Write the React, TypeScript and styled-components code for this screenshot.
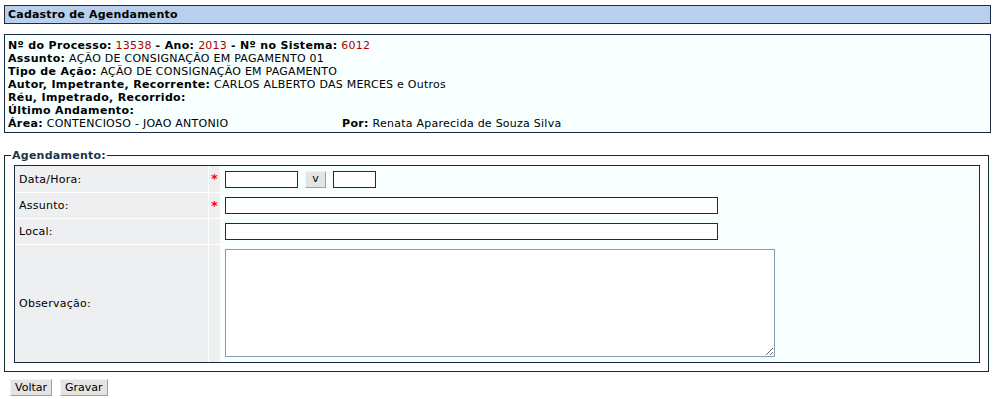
import styled, { createGlobalStyle } from 'styled-components'
import { ReactNode } from 'react'

const GlobalStyle = createGlobalStyle`
  body {
    margin: 0;
    background: #ffffff;
    font-family: 'DejaVu Sans', Verdana, sans-serif;
    font-size: 11px;
    letter-spacing: 0.25px;
    color: #000000;
  }
`

const Page = styled.div`
  padding: 5px 4px 0 4px;
  display: flex;
  flex-direction: column;
`

const TitleBar = styled.div`
  height: 17px;
  line-height: 17px;
  padding-left: 3px;
  background: #b8d0ec;
  border: 1px solid #1b2b45;
  font-weight: bold;
  letter-spacing: 0.2px;
  color: #000000;
`

const InfoBox = styled.div`
  margin-top: 10px;
  padding: 4px 3px 2px 3px;
  background: #f7ffff;
  border: 1px solid #1b2b45;
  line-height: 13px;
`

const InfoLine = styled.div`
  display: flex;
  white-space: nowrap;
`

const InfoCell = styled.div<{ $width?: number }>`
  width: ${({ $width }) => ($width ? `${$width}px` : 'auto')};
`

const Label = styled.b`
  font-weight: bold;
  letter-spacing: 0.35px;
`

const Highlight = styled.span`
  color: #b00000;
`

const FieldSet = styled.fieldset`
  margin: 16px 2px 0 0;
  padding: 3px 8px 8px 9px;
  border: 1px solid #10302f;
  min-width: 0;
`

const Legend = styled.legend`
  margin-left: -3px;
  padding: 0 1px;
  font-weight: bold;
  color: #1c3448;
  line-height: 13px;
`

const FormGrid = styled.div`
  display: grid;
  grid-template-columns: 193px 11px 1fr;
  gap: 1px;
  background: #ffffff;
  border: 1px solid #1b2b45;
`

const LabelCell = styled.div<{ $height: number }>`
  height: ${({ $height }) => $height}px;
  display: flex;
  align-items: center;
  padding-left: 4px;
  background: #eeeff1;
`

const MarkCell = styled.div`
  display: flex;
  justify-content: center;
  padding-top: 8px;
  background: #eeeff1;
  color: #ff0000;
  font-size: 13px;
  font-weight: bold;
  line-height: 10px;
`

const FieldCell = styled.div<{ $top?: boolean }>`
  display: flex;
  align-items: ${({ $top }) => ($top ? 'flex-start' : 'center')};
  padding: ${({ $top }) => ($top ? '4px 0 0 4px' : '0 0 0 4px')};
  background: #f7ffff;
`

const TextInput = styled.input<{ $width: number }>`
  box-sizing: border-box;
  width: ${({ $width }) => $width}px;
  height: 17px;
  margin: 0;
  padding: 0 2px;
  border: 1px solid #1b2b45;
  background: #ffffff;
  font: inherit;
`

const PickerButton = styled.button`
  box-sizing: border-box;
  width: 21px;
  height: 17px;
  margin: 0 7px 0 7px;
  padding: 0;
  background: #e4e4e4;
  border: 1px solid;
  border-color: #f4f4f4 #a0a0a0 #a0a0a0 #f4f4f4;
  font-family: 'DejaVu Sans', Verdana, sans-serif;
  font-size: 11px;
  line-height: 14px;
  color: #000000;
`

const TextArea = styled.textarea`
  box-sizing: border-box;
  width: 550px;
  height: 108px;
  margin: 0;
  border: 1px solid #7f9db9;
  background: #ffffff;
  font: inherit;
  resize: both;
`

const ActionBar = styled.div`
  display: flex;
  gap: 8px;
  margin: 7px 0 0 6px;
`

const ActionButton = styled.button`
  box-sizing: border-box;
  height: 17px;
  padding: 0 4px;
  background: #e4e4e4;
  border: 1px solid;
  border-color: #f4f4f4 #a0a0a0 #a0a0a0 #f4f4f4;
  font-family: Tahoma, 'DejaVu Sans', sans-serif;
  font-size: 11px;
  letter-spacing: 0;
  line-height: 14px;
  color: #000000;
`

interface FormRowProps {
  label: string
  required?: boolean
  height: number
  top?: boolean
  children: ReactNode
}

const FormRow = ({ label, required, height, top, children }: FormRowProps) => (
  <>
    <LabelCell $height={height}>{label}</LabelCell>
    <MarkCell>{required ? '*' : ''}</MarkCell>
    <FieldCell $top={top}>{children}</FieldCell>
  </>
)

export default function App() {
  return (
    <>
      <GlobalStyle />
      <Page>
        <TitleBar>Cadastro de Agendamento</TitleBar>
        <InfoBox>
          <InfoLine>
            <Label>Nº do Processo:</Label>&nbsp;<Highlight>13538</Highlight>&nbsp;<Label>- Ano:</Label>&nbsp;
            <Highlight>2013</Highlight>&nbsp;<Label>- Nº no Sistema:</Label>&nbsp;<Highlight>6012</Highlight>
          </InfoLine>
          <InfoLine>
            <Label>Assunto:</Label>&nbsp;AÇÃO DE CONSIGNAÇÃO EM PAGAMENTO 01
          </InfoLine>
          <InfoLine>
            <Label>Tipo de Ação:</Label>&nbsp;AÇÃO DE CONSIGNAÇÃO EM PAGAMENTO
          </InfoLine>
          <InfoLine>
            <Label>Autor, Impetrante, Recorrente:</Label>&nbsp;CARLOS ALBERTO DAS MERCES e Outros
          </InfoLine>
          <InfoLine>
            <Label>Réu, Impetrado, Recorrido:</Label>
          </InfoLine>
          <InfoLine>
            <Label>Último Andamento:</Label>
          </InfoLine>
          <InfoLine>
            <InfoCell $width={334}>
              <Label>Área:</Label> CONTENCIOSO - JOAO ANTONIO
            </InfoCell>
            <InfoCell>
              <Label>Por:</Label> Renata Aparecida de Souza Silva
            </InfoCell>
          </InfoLine>
        </InfoBox>
        <FieldSet>
          <Legend>Agendamento:</Legend>
          <FormGrid>
            <FormRow label="Data/Hora:" required height={26}>
              <TextInput $width={73} />
              <PickerButton>v</PickerButton>
              <TextInput $width={43} />
            </FormRow>
            <FormRow label="Assunto:" required height={25}>
              <TextInput $width={493} />
            </FormRow>
            <FormRow label="Local:" height={25}>
              <TextInput $width={493} />
            </FormRow>
            <FormRow label="Observação:" height={117} top>
              <TextArea />
            </FormRow>
          </FormGrid>
        </FieldSet>
        <ActionBar>
          <ActionButton>Voltar</ActionButton>
          <ActionButton>Gravar</ActionButton>
        </ActionBar>
      </Page>
    </>
  )
}
